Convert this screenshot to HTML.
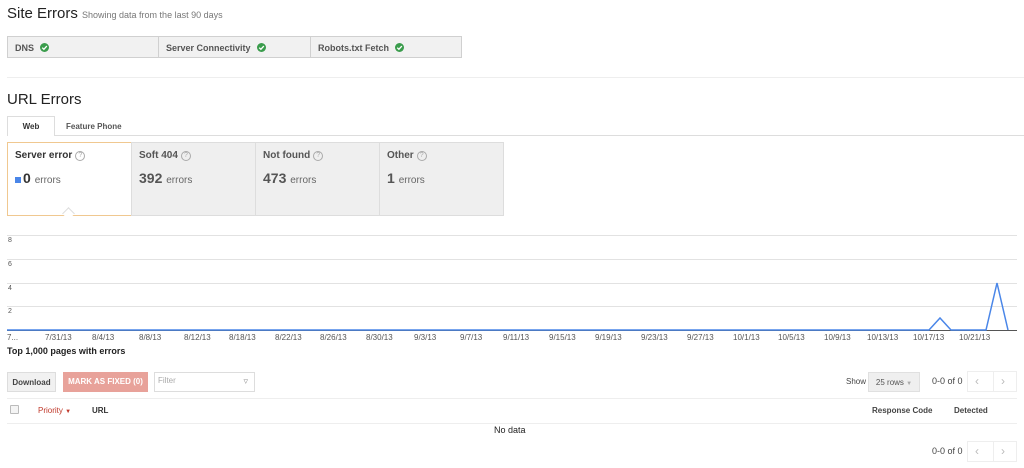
<!DOCTYPE html>
<html><head><meta charset="utf-8"><style>
body{margin:0;width:1024px;height:468px;background:#fff;font-family:"Liberation Sans",Arial,sans-serif;color:#333;position:relative;overflow:hidden}
.a{position:absolute;white-space:nowrap}
.chk{display:inline-block;width:9px;height:9px;vertical-align:middle;margin-left:6px;position:relative;top:-1px}
.cell{position:absolute;top:36px;height:22px;background:#f1f1f1;border:1px solid #d0d0d0;font-size:9px;font-weight:bold;color:#555;line-height:22px;padding-left:7px;box-sizing:border-box}
.card{position:absolute;top:142px;height:74px;width:125px;background:#efefef;border:1px solid #ddd;box-sizing:border-box;padding:7px 7px}
.card .t{font-size:10px;font-weight:bold;color:#555}
.card .n{font-size:14px;font-weight:bold;color:#555;margin-top:9px}
.card .n span{font-size:10px;font-weight:normal;color:#666}
.q{display:inline-block;width:8px;height:8px;border:1px solid #aaa;border-radius:50%;font-size:7px;line-height:8px;text-align:center;color:#aaa;font-weight:normal;margin-left:3px;vertical-align:1px}
.xl{position:absolute;top:333px;font-size:8px;color:#555}
.yl{position:absolute;left:8px;font-size:7px;color:#555}
.btn{position:absolute;font-size:8px;font-weight:bold;line-height:20px;text-align:center;box-sizing:border-box}
</style></head><body>
<div class="a" style="left:7px;top:5px;font-size:15px;color:#222">Site Errors <span style="font-size:9px;color:#777">Showing data from the last 90 days</span></div>
<div class="cell" style="left:7px;width:152px">DNS<svg class="chk" viewBox="0 0 10 10"><circle cx="5" cy="5" r="5" fill="#3a9c4c"/><path d="M2.5 5.2 L4.3 7 L7.6 3.4" stroke="#fff" stroke-width="1.5" fill="none"/></svg></div>
<div class="cell" style="left:158px;width:153px">Server Connectivity<svg class="chk" viewBox="0 0 10 10"><circle cx="5" cy="5" r="5" fill="#3a9c4c"/><path d="M2.5 5.2 L4.3 7 L7.6 3.4" stroke="#fff" stroke-width="1.5" fill="none"/></svg></div>
<div class="cell" style="left:310px;width:152px">Robots.txt Fetch<svg class="chk" viewBox="0 0 10 10"><circle cx="5" cy="5" r="5" fill="#3a9c4c"/><path d="M2.5 5.2 L4.3 7 L7.6 3.4" stroke="#fff" stroke-width="1.5" fill="none"/></svg></div>
<div class="a" style="left:7px;top:77px;width:1017px;height:1px;background:#eee"></div>
<div class="a" style="left:7px;top:91px;font-size:15px;color:#222">URL Errors</div>
<div class="a" style="left:7px;top:135px;width:1017px;height:1px;background:#ddd"></div>
<div class="a" style="left:7px;top:116px;width:48px;height:20px;background:#fff;border:1px solid #ddd;border-bottom:none;box-sizing:border-box;font-size:8px;font-weight:bold;text-align:center;line-height:19px">Web</div>
<div class="a" style="left:66px;top:122px;font-size:8px;font-weight:bold;color:#555">Feature Phone</div>
<div class="card" style="left:7px;background:#fff;border-color:#f0c890"><div class="t" style="color:#333">Server error<span class="q">?</span></div><div class="n" style="color:#333"><span style="display:inline-block;width:6px;height:6px;background:#4a86e8;margin-right:2px"></span>0 <span>errors</span></div></div>
<div class="a" style="left:64px;top:209px;width:8px;height:8px;border-left:1px solid #ddd;border-top:1px solid #ddd;transform:rotate(45deg);background:#fff"></div>
<div class="card" style="left:131px"><div class="t">Soft 404<span class="q">?</span></div><div class="n">392 <span>errors</span></div></div>
<div class="card" style="left:255px"><div class="t">Not found<span class="q">?</span></div><div class="n">473 <span>errors</span></div></div>
<div class="card" style="left:379px"><div class="t">Other<span class="q">?</span></div><div class="n">1 <span>errors</span></div></div>
<svg class="a" style="left:0;top:0" width="1024" height="340">
<g stroke="#e2e2e2" stroke-width="1"><line x1="7" y1="235.5" x2="1017" y2="235.5"/><line x1="7" y1="259.5" x2="1017" y2="259.5"/><line x1="7" y1="283.5" x2="1017" y2="283.5"/><line x1="7" y1="306.5" x2="1017" y2="306.5"/></g>
<line x1="7" y1="330.5" x2="1017" y2="330.5" stroke="#555"/>
<polyline points="7,330 929,330 940,318 951,330 986,330 997,283 1008,330" fill="none" stroke="#4a86e8" stroke-width="1.5"/>
</svg>
<div class="yl" style="top:237px">8</div><div class="yl" style="top:261px">6</div><div class="yl" style="top:285px">4</div><div class="yl" style="top:308px">2</div>
<div class="xl" style="left:7px">7...</div>
<div class="xl" style="left:45px">7/31/13</div><div class="xl" style="left:92px">8/4/13</div><div class="xl" style="left:139px">8/8/13</div><div class="xl" style="left:184px">8/12/13</div><div class="xl" style="left:229px">8/18/13</div><div class="xl" style="left:275px">8/22/13</div><div class="xl" style="left:320px">8/26/13</div><div class="xl" style="left:366px">8/30/13</div><div class="xl" style="left:414px">9/3/13</div><div class="xl" style="left:460px">9/7/13</div><div class="xl" style="left:503px">9/11/13</div><div class="xl" style="left:549px">9/15/13</div><div class="xl" style="left:595px">9/19/13</div><div class="xl" style="left:641px">9/23/13</div><div class="xl" style="left:687px">9/27/13</div><div class="xl" style="left:733px">10/1/13</div><div class="xl" style="left:778px">10/5/13</div><div class="xl" style="left:824px">10/9/13</div><div class="xl" style="left:867px">10/13/13</div><div class="xl" style="left:913px">10/17/13</div><div class="xl" style="left:959px">10/21/13</div>
<div class="a" style="left:7px;top:346px;font-size:9px;font-weight:bold;color:#222">Top 1,000 pages with errors</div>
<div class="btn" style="left:7px;top:372px;width:49px;height:20px;background:#f1f1f1;border:1px solid #ddd;color:#444">Download</div>
<div class="btn" style="left:63px;top:372px;width:85px;height:20px;background:#e8a29a;color:#fff">MARK AS FIXED (0)</div>
<div class="a" style="left:154px;top:372px;width:101px;height:20px;border:1px solid #ddd;box-sizing:border-box;font-size:8px;color:#aaa;line-height:16px;padding-left:3px">Filter<span style="position:absolute;right:6px;top:0;color:#999;font-size:9px">&#9663;</span></div>
<div class="a" style="left:846px;top:377px;font-size:8px;color:#444">Show</div>
<div class="btn" style="left:868px;top:372px;width:52px;height:20px;background:#efefef;border:1px solid #e0e0e0;color:#555;font-weight:normal">25 rows <span style="color:#aaa;font-size:6px">&#9660;</span></div>
<div class="a" style="left:932px;top:376px;font-size:9px;color:#444">0-0 of 0</div>
<div class="a" style="left:967px;top:371px;width:50px;height:21px;border:1px solid #eee;box-sizing:border-box;font-size:12px;color:#bbb;line-height:19px"><span style="position:absolute;left:7px">&#8249;</span><span style="position:absolute;left:25px;top:0;width:1px;height:19px;background:#eee"></span><span style="position:absolute;left:33px">&#8250;</span></div>
<div class="a" style="left:7px;top:398px;width:1010px;height:1px;background:#eee"></div>
<div class="a" style="left:10px;top:405px;width:7px;height:7px;border:1px solid #bbb;border-radius:1px;background:#f4f4f4"></div>
<div class="a" style="left:38px;top:406px;font-size:8px;color:#c0392b">Priority <span style="font-size:6px">&#9660;</span></div>
<div class="a" style="left:92px;top:406px;font-size:8px;font-weight:bold;color:#333">URL</div>
<div class="a" style="left:872px;top:406px;font-size:8px;font-weight:bold;color:#444">Response Code</div>
<div class="a" style="left:954px;top:406px;font-size:8px;font-weight:bold;color:#444">Detected</div>
<div class="a" style="left:7px;top:423px;width:1010px;height:1px;background:#eee"></div>
<div class="a" style="left:494px;top:425px;font-size:9px;color:#222">No data</div>
<div class="a" style="left:932px;top:446px;font-size:9px;color:#444">0-0 of 0</div>
<div class="a" style="left:967px;top:441px;width:50px;height:21px;border:1px solid #eee;box-sizing:border-box;font-size:12px;color:#bbb;line-height:19px"><span style="position:absolute;left:7px">&#8249;</span><span style="position:absolute;left:25px;top:0;width:1px;height:19px;background:#eee"></span><span style="position:absolute;left:33px">&#8250;</span></div>
</body></html>
